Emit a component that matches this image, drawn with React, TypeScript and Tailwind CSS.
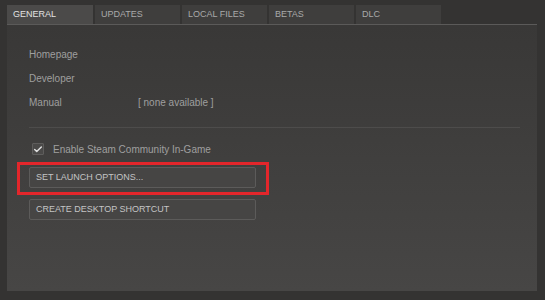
import { Check } from "lucide-react";

const tabs = ["GENERAL", "UPDATES", "LOCAL FILES", "BETAS", "DLC"];

function InfoRow({ label, value }: { label: string; value?: string }) {
    return (
        <div className="flex h-[24px] items-center">
            <span className="w-[109px]">{label}</span>
            {value && <span>{value}</span>}
        </div>
    );
}

function SteamButton({ children }: { children: string }) {
    return (
        <button className="flex h-[21px] w-[227px] items-center rounded-[2px] border border-[#5c5b5a] bg-[#464544] pl-[6px] text-[9px] text-[#c4c4c4]">
            {children}
        </button>
    );
}

export default function App() {
    return (
        <div
            className="flex h-[300px] w-[545px] flex-col bg-[#343332] pl-[7px] pr-[8px] pt-[5px] pb-[9px] text-[10px] text-[#9f9f9f]"
            style={{ fontFamily: '"Liberation Sans", Arial, sans-serif' }}
        >
            <div className="flex gap-[2px]">
                {tabs.map((t, i) => (
                    <div
                        key={t}
                        className={
                            i === 0
                                ? "flex h-[19px] w-[86px] items-center bg-[#4b4a49] pl-[6px] text-[9px] text-[#e2e2e2]"
                                : "flex h-[19px] w-[85px] items-center bg-[#3f3e3d] pl-[6px] text-[9px] text-[#a9a9a9]"
                        }
                    >
                        {t}
                    </div>
                ))}
            </div>
            <div className="h-px bg-[#5b5a59]" />
            <div className="relative flex-1 bg-gradient-to-b from-[#393837] to-[#474645] pl-[22px] pt-[17px]">
                <InfoRow label="Homepage" />
                <InfoRow label="Developer" />
                <InfoRow label="Manual" value="[ none available ]" />
                <div className="mt-[13px] mr-[17px] h-px bg-[#4d4c4b]" />
                <div className="mt-[9px] flex h-[24px] items-center gap-[9px] pl-[3px]">
                    <div className="flex h-[12px] w-[12px] items-center justify-center rounded-[1px] border border-[#5e5d5c] bg-[#4a4948]">
                        <Check size={11} strokeWidth={3.5} className="text-[#e0e0e0]" />
                    </div>
                    <span>Enable Steam Community In-Game</span>
                </div>
                <div className="mt-[6px] flex flex-col gap-[11px]">
                    <SteamButton>SET LAUNCH OPTIONS...</SteamButton>
                    <SteamButton>CREATE DESKTOP SHORTCUT</SteamButton>
                </div>
                <div className="absolute left-[10px] top-[137px] h-[33px] w-[252px] border-[3px] border-[#e3262b]" />
            </div>
        </div>
    );
}
